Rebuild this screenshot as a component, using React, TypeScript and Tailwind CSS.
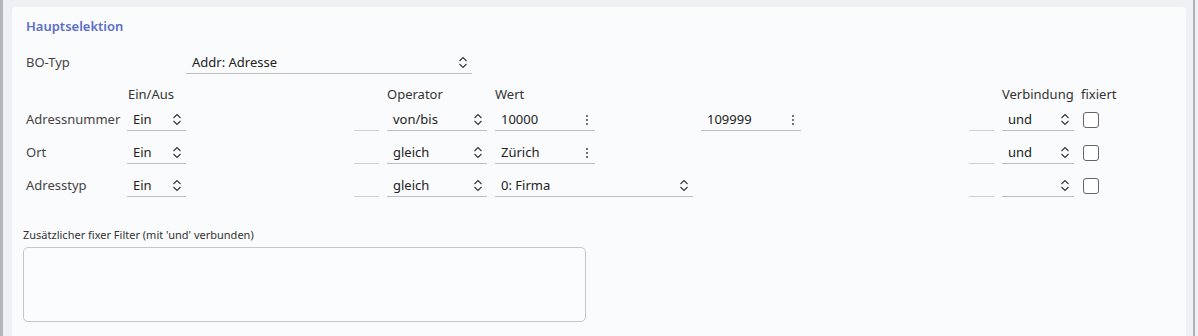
import React from "react";

const Chevron = () => (
  <svg width="10" height="13" viewBox="0 0 10 13" fill="none" stroke="#333" strokeWidth="1.1" className="shrink-0">
    <path d="M1.5 5 L5 1.5 L8.5 5" />
    <path d="M1.5 8 L5 11.5 L8.5 8" />
  </svg>
);

const Dots = () => (
  <svg width="4" height="12" viewBox="0 0 4 12" fill="#444" className="shrink-0">
    <circle cx="2" cy="2" r="1" />
    <circle cx="2" cy="6" r="1" />
    <circle cx="2" cy="10" r="1" />
  </svg>
);

const Select = ({ value, width }: { value: string; width: string }) => (
  <div className={`flex h-[22px] items-center justify-between border-b border-[#bdbdbd] pl-[6px] pr-[4px] ${width}`}>
    <span className="text-[#222]">{value}</span>
    <Chevron />
  </div>
);

const Input = ({ value, width }: { value: string; width: string }) => (
  <div className={`flex h-[22px] items-center justify-between border-b border-[#bdbdbd] pl-[6px] pr-[6px] ${width}`}>
    <span className="text-[#222]">{value}</span>
    <Dots />
  </div>
);

const Blank = () => <div className="h-[22px] w-[25px] border-b border-[#cfcfcf]" />;

const Checkbox = () => (
  <div className="h-[16px] w-[16px] rounded-[3px] border border-[#666] bg-white" />
);

type Row = {
  label: string;
  operator: string;
  value: React.ReactNode;
  link: string;
};

const rows: Row[] = [
  {
    label: "Adressnummer",
    operator: "von/bis",
    value: (
      <>
        <div className="w-[206px]">
          <Input value="10000" width="w-[100px]" />
        </div>
        <div className="w-[268px]">
          <Input value="109999" width="w-[100px]" />
        </div>
      </>
    ),
    link: "und",
  },
  {
    label: "Ort",
    operator: "gleich",
    value: (
      <div className="w-[474px]">
        <Input value="Zürich" width="w-[100px]" />
      </div>
    ),
    link: "und",
  },
  {
    label: "Adresstyp",
    operator: "gleich",
    value: (
      <div className="w-[474px]">
        <Select value="0: Firma" width="w-[198px]" />
      </div>
    ),
    link: "",
  },
];

export default function App() {
  return (
    <div
      className="flex h-[336px] w-[1198px] bg-[#eff0f3] text-[13px] text-[#444]"
      style={{ fontFamily: '"Noto Sans", "Open Sans", sans-serif' }}
    >
      <div className="w-[3px] bg-[#b5b5b8]" />
      <div className="ml-[9px] mt-[7px] w-[1174px] rounded-t-[4px] bg-[#fafbfc] pl-[14px] pt-[10px]">
        <div className="flex h-[20px] items-center font-semibold text-[#5b6ec8]">Hauptselektion</div>

        <div className="mt-[15px] flex h-[22px] items-center">
          <div className="w-[160px]">BO-Typ</div>
          <Select value="Addr: Adresse" width="w-[286px]" />
        </div>

        <div className="mt-[11px] flex h-[20px] items-center text-[#333]">
          <div className="w-[101px]" />
          <div className="w-[260px] pl-[1px]">Ein/Aus</div>
          <div className="w-[108px]">Operator</div>
          <div className="w-[507px]">Wert</div>
          <div className="w-[79px]">Verbindung</div>
          <div>fixiert</div>
        </div>

        {rows.map((r, i) => (
          <div key={r.label} className={`flex h-[22px] items-center ${i === 0 ? "mt-[4px]" : "mt-[11px]"}`}>
            <div className="w-[101px]">{r.label}</div>
            <div className="w-[227px]">
              <Select value="Ein" width="w-[59px]" />
            </div>
            <Blank />
            <div className="ml-[8px] w-[108px]">
              <Select value={r.operator} width="w-[100px]" />
            </div>
            {r.value}
            <Blank />
            <div className="ml-[8px]">
              <Select value={r.link} width="w-[72px]" />
            </div>
            <div className="ml-[9px]">
              <Checkbox />
            </div>
          </div>
        ))}

        <div className="-ml-[3px] mt-[30px] h-[16px] text-[11px] leading-[16px] text-[#333]">
          Zusätzlicher fixer Filter (mit 'und' verbunden)
        </div>
        <div className="-ml-[3px] mt-[4px] h-[75px] w-[563px] rounded-[5px] border border-[#c6c6c6] bg-[#fbfcfd]" />
      </div>
      <div className="ml-[7px] w-[2px] bg-[#b0b0b4]" />
    </div>
  );
}
